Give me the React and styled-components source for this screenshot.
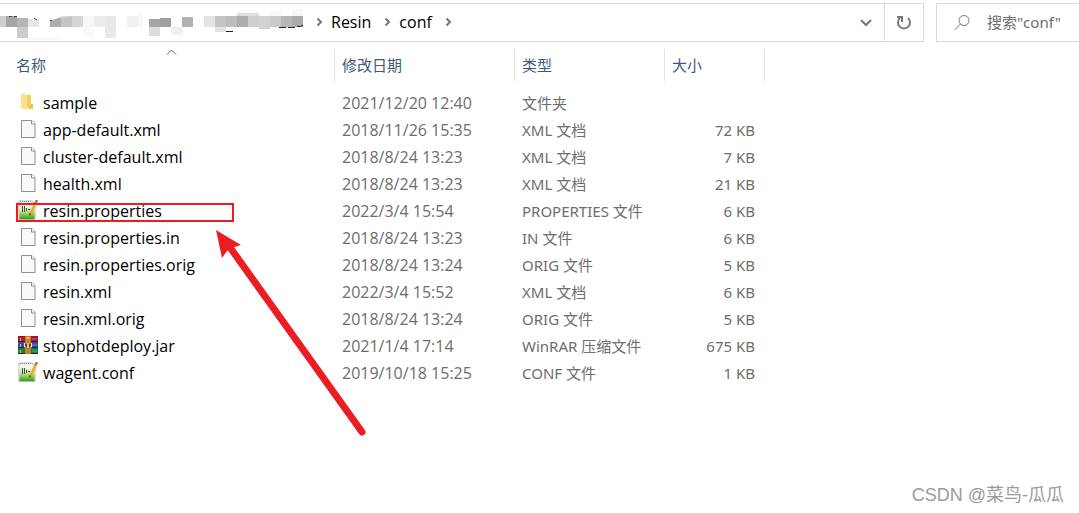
import React from 'react'
import styled, { createGlobalStyle } from 'styled-components'

const GlobalStyle = createGlobalStyle`
  * {
    box-sizing: border-box;
  }

  body {
    margin: 0;
    background: #ffffff;
    font-family: 'Noto Sans', 'Noto Sans CJK SC', sans-serif;
    font-size: 15px;
    line-height: 20px;
    color: #000000;
  }

  button,
  input {
    font: inherit;
  }
`

const Window = styled.div`
  position: relative;
  min-height: 100vh;
  padding-top: 3px;
  overflow: hidden;
`

const Toolbar = styled.div`
  display: flex;
  gap: 12px;
  height: 39px;
`

const AddressBar = styled.nav`
  display: flex;
  flex: 1;
  align-items: center;
  min-width: 0;
  border: 1px solid #d9d9d9;
  border-left: none;
`

const Crumbs = styled.div`
  display: flex;
  flex: 1;
  align-items: center;
  min-width: 0;
`

const Crumb = styled.button`
  padding: 0 0 2px;
  border: none;
  background: none;
  color: #000000;
  font-family: 'Open Sans', sans-serif;
  font-size: 16px;
`

const Separator = styled.svg`
  flex: none;
  width: 7px;
  height: 10px;
  margin: 0 8px 2px 13px;
`

const BarButton = styled.button`
  display: flex;
  align-items: center;
  justify-content: center;
  width: ${props => props.$width}px;
  height: 100%;
  padding: 0;
  border: none;
  border-left: ${props => (props.$divided ? '1px solid #d9d9d9' : 'none')};
  background: none;
`

const SearchBox = styled.label`
  display: flex;
  align-items: center;
  gap: 16px;
  width: 143px;
  padding: 0 0 2px 16px;
  border: 1px solid #d9d9d9;
  border-right: none;
`

const SearchInput = styled.input`
  flex: 1;
  min-width: 0;
  padding: 0;
  border: none;
  outline: none;

  &::placeholder {
    color: #6d6d6d;
    opacity: 1;
  }
`

const FileTable = styled.table`
  width: 765px;
  margin-top: 7px;
  border-collapse: separate;
  border-spacing: 0;
  table-layout: fixed;
`

const HeadCell = styled.th`
  position: relative;
  width: ${props => props.$width}px;
  height: 32px;
  padding: 0 0 0 ${props => (props.$first ? 16 : 7)}px;
  border-right: 1px solid #e2e2e2;
  color: #44597a;
  font-weight: 400;
  text-align: left;
`

const SortMark = styled.svg`
  position: absolute;
  top: 0;
  left: 50%;
  width: 11px;
  height: 7px;
  margin-left: -1px;
`

const Body = styled.tbody`
  &::before {
    content: '';
    display: block;
    height: 8px;
  }
`

const Cell = styled.td`
  height: 27px;
  padding: 0 10px 0 7px;
  color: #6d6d6d;
  text-align: ${props => (props.$right ? 'right' : 'left')};
  white-space: nowrap;
`

const DateCell = styled(Cell)`
  font-family: 'Open Sans', sans-serif;
  font-size: 16px;
`

const NameCell = styled(Cell)`
  position: relative;
  padding-left: 18px;
  color: #000000;
  font-family: 'Open Sans', sans-serif;
  font-size: 16px;
`

const FileName = styled.div`
  display: flex;
  align-items: center;
  gap: 5px;
`

const FileIcon = styled.svg`
  flex: none;
  width: 20px;
  height: 20px;
  margin-bottom: 2px;
`

const Highlight = styled.div`
  position: absolute;
  top: 6px;
  left: 16px;
  width: 218px;
  height: 19px;
  border: 2px solid #ed1c24;
`

const Arrow = styled.svg`
  position: absolute;
  top: 228px;
  left: 214px;
  width: 154px;
  height: 210px;
  pointer-events: none;
`

const Watermark = styled.div`
  position: absolute;
  right: 15px;
  bottom: 8px;
  color: #9b9b9b;
  font-family: 'Liberation Sans', 'Noto Sans CJK SC', sans-serif;
  font-size: 18px;
`

// x, y, width, height, fill
const BLOCKS = [
  [0, 16, 6, 11, '#cfcfcf'],
  [6, 16, 11, 11, '#a5a5a5'],
  [17, 18, 11, 9, '#b5b5b5'],
  [28, 19, 11, 8, '#e6e6e6'],
  [17, 27, 11, 11, '#cccccc'],
  [28, 38, 32, 2, '#f7f7f7'],
  [61, 16, 11, 11, '#c4c4c4'],
  [72, 16, 11, 11, '#d6d6d6'],
  [83, 16, 11, 11, '#f7f7f7'],
  [94, 16, 11, 11, '#ededed'],
  [105, 16, 11, 11, '#e9e9e9'],
  [83, 27, 11, 11, '#fafafa'],
  [105, 27, 11, 11, '#e8e8e8'],
  [127, 16, 11, 11, '#f1f1f1'],
  [138, 12, 5, 15, '#f8f8f8'],
  [149, 19, 11, 8, '#a6a6a6'],
  [160, 18, 11, 9, '#a0a0a0'],
  [149, 27, 11, 9, '#dddddd'],
  [171, 27, 11, 8, '#f0f0f0'],
  [182, 17, 11, 10, '#b2b2b2'],
  [204, 16, 11, 11, '#e4e4e4'],
  [215, 16, 11, 11, '#c5c5c5'],
  [226, 16, 11, 11, '#bdbdbd'],
  [237, 16, 11, 11, '#adadad'],
  [248, 16, 11, 11, '#cecece'],
  [259, 16, 11, 13, '#d2d2d2'],
  [270, 16, 11, 11, '#cbcbcb'],
  [281, 16, 11, 11, '#b7b7b7'],
  [292, 16, 11, 11, '#ababab'],
  [215, 27, 11, 5, '#e3e3e3'],
  [237, 13, 22, 3, '#dedede'],
  [270, 11, 11, 5, '#f8f8f8'],
  [292, 9, 11, 7, '#f8f8f8'],
]

const PathBlocks = styled.svg`
  flex: none;
  width: 303px;
  height: 37px;
`

const HiddenPath = () => (
  <PathBlocks viewBox="0 4 303 37" aria-hidden="true">
    {BLOCKS.map(([x, y, width, height, fill]) => (
      <rect key={`${x}-${y}`} x={x} y={y} width={width} height={height} fill={fill} />
    ))}
    <path d="M50 21l11-4v10H50z" fill="#adadad" />
    <path d="M61 16h11l-11 3z" fill="#d8d8d8" />
    <path d="M9 16.500h3M14 16.500h3M34 18l3 2M50 20.500h2" stroke="#444444" fill="none" />
    <path d="M226 31.500h7M279 27.500h7M288 27.500h7M297 26q3 2 6-1" stroke="#222222" fill="none" />
  </PathBlocks>
)

const Chevron = () => (
  <Separator viewBox="0 0 7 10" fill="none" stroke="#777777" strokeWidth="2">
    <path d="M1.500 1.500L5 5 1.500 8.500" />
  </Separator>
)

const FolderIcon = () => (
  <FileIcon viewBox="0 0 20 20">
    <path d="M3 2h8v12H3z" fill="#ffe9a6" />
    <path d="M9 3h4v13H9z" fill="#f3cf6b" />
    <path d="M13 12h2v5h-5z" fill="#eec259" />
    <path d="M3 2l6 2v14l-6-2z" fill="#ffe08a" />
  </FileIcon>
)

const PageIcon = () => (
  <FileIcon viewBox="0 0 20 20">
    <path d="M3.500 1.500h10.500l3 3v14H3.500z" fill="#f8faf9" stroke="#8f8f8f" />
    <path d="M13.500 1.500v3.500h3.500" fill="#ffffff" stroke="#8f8f8f" />
  </FileIcon>
)

const EditorIcon = () => (
  <FileIcon viewBox="0 0 20 20">
    <defs>
      <linearGradient id="editorGreen" x1="0" y1="0" x2="0" y2="1">
        <stop offset="0" stopColor="#f6f9f2" />
        <stop offset="0.400" stopColor="#d3ebb4" />
        <stop offset="0.750" stopColor="#79c63c" />
        <stop offset="1" stopColor="#2f9e20" />
      </linearGradient>
    </defs>
    <path d="M1 1h13l3 3v15.500H1z" fill="#f2f4f2" stroke="#b4bab4" />
    <path d="M1.500 4h15v15h-15z" fill="url(#editorGreen)" />
    <path d="M2 1.500h12" stroke="#8b8b8b" strokeDasharray="1 1" />
    <path d="M4.500 6v6M6.500 6v6M8.500 8v3" stroke="#3c5236" />
    <path d="M10 9.500h2" stroke="#3c5236" />
    <path d="M18 2l-5.500 12" stroke="#eea62c" strokeWidth="2.500" />
    <path d="M19 0l-1.500 3" stroke="#b9694f" strokeWidth="2.500" />
    <path d="M11.500 13l2 1-2.500 2z" fill="#594324" />
  </FileIcon>
)

const ArchiveIcon = () => (
  <FileIcon viewBox="0 0 20 20">
    <path d="M0 1h20v6H0z" fill="#b91532" />
    <path d="M0 7h20v6H0z" fill="#3e49a5" />
    <path d="M0 13h20v6H0z" fill="#16804a" />
    <path d="M0 1.500h20" stroke="#76202d" />
    <path d="M0 6.500h20M0 12.500h20M0 18.500h20" stroke="#202231" />
    <path d="M2.500 3v3M2.500 9v3M2.500 15v3" stroke="#f0b642" />
    <path d="M14 10h5M14 4h5M14 16h5" stroke="#ffffff" strokeOpacity="0.300" />
    <path d="M7 1h6v18H7z" fill="#c8711e" />
    <path d="M8 2h4v2H8z" fill="#f0b84a" />
    <path d="M8.500 5v3M11.500 5v3M8.500 14v4M11.500 14v4" stroke="#dc9638" />
    <path d="M6 9h8v4H6z" fill="#493629" />
    <path d="M6.500 8v4h2M13.500 8v4h-2" stroke="#eeeeee" fill="none" />
    <path d="M9 8h2v5H9z" fill="#f3c263" />
  </FileIcon>
)

const ICONS = {
  folder: FolderIcon,
  page: PageIcon,
  editor: EditorIcon,
  archive: ArchiveIcon,
}

const FILES = [
  { name: 'sample', date: '2021/12/20 12:40', type: '文件夹', size: '', icon: 'folder' },
  { name: 'app-default.xml', date: '2018/11/26 15:35', type: 'XML 文档', size: '72 KB', icon: 'page' },
  { name: 'cluster-default.xml', date: '2018/8/24 13:23', type: 'XML 文档', size: '7 KB', icon: 'page' },
  { name: 'health.xml', date: '2018/8/24 13:23', type: 'XML 文档', size: '21 KB', icon: 'page' },
  { name: 'resin.properties', date: '2022/3/4 15:54', type: 'PROPERTIES 文件', size: '6 KB', icon: 'editor', marked: true },
  { name: 'resin.properties.in', date: '2018/8/24 13:23', type: 'IN 文件', size: '6 KB', icon: 'page' },
  { name: 'resin.properties.orig', date: '2018/8/24 13:24', type: 'ORIG 文件', size: '5 KB', icon: 'page' },
  { name: 'resin.xml', date: '2022/3/4 15:52', type: 'XML 文档', size: '6 KB', icon: 'page' },
  { name: 'resin.xml.orig', date: '2018/8/24 13:24', type: 'ORIG 文件', size: '5 KB', icon: 'page' },
  { name: 'stophotdeploy.jar', date: '2021/1/4 17:14', type: 'WinRAR 压缩文件', size: '675 KB', icon: 'archive' },
  { name: 'wagent.conf', date: '2019/10/18 15:25', type: 'CONF 文件', size: '1 KB', icon: 'editor' },
]

const FileRow = ({ file }) => {
  const Icon = ICONS[file.icon]

  return (
    <tr>
      <NameCell>
        <FileName>
          <Icon />
          {file.name}
        </FileName>
        {file.marked && <Highlight />}
      </NameCell>
      <DateCell>{file.date}</DateCell>
      <Cell>{file.type}</Cell>
      <Cell $right>{file.size}</Cell>
    </tr>
  )
}

export default function App() {
  return (
    <Window>
      <GlobalStyle />
      <Toolbar>
        <AddressBar>
          <Crumbs>
            <HiddenPath />
            <Chevron />
            <Crumb>Resin</Crumb>
            <Chevron />
            <Crumb>conf</Crumb>
            <Chevron />
          </Crumbs>
          <BarButton $width={36} aria-label="History">
            <svg width="12" height="8" viewBox="0 0 12 8" fill="none" stroke="#777777" strokeWidth="2">
              <path d="M1 1l5 5 5-5" />
            </svg>
          </BarButton>
          <BarButton $width={39} $divided aria-label="Refresh">
            <svg width="16" height="16" viewBox="0 0 16 16" fill="none" stroke="#777777" strokeWidth="2">
              <path d="M12 3a6 6 0 1 1-8 0" />
              <path d="M1 2h5v5" />
            </svg>
          </BarButton>
        </AddressBar>
        <SearchBox>
          <svg width="18" height="18" viewBox="0 0 18 18" fill="none" stroke="#777777">
            <circle cx="11" cy="7.500" r="5" />
            <path d="M7.500 11L1.500 17" />
          </svg>
          <SearchInput type="text" aria-label="Search" placeholder={'搜索"conf"'} />
        </SearchBox>
      </Toolbar>

      <FileTable>
        <thead>
          <tr>
            <HeadCell $width={335} $first>
              名称
              <SortMark viewBox="0 0 11 7" fill="none" stroke="#666666">
                <path d="M1 5.500l4.500-4.500L10 5.500" />
              </SortMark>
            </HeadCell>
            <HeadCell $width={180}>修改日期</HeadCell>
            <HeadCell $width={150}>类型</HeadCell>
            <HeadCell $width={100}>大小</HeadCell>
          </tr>
        </thead>
        <Body>
          {FILES.map(file => (
            <FileRow key={file.name} file={file} />
          ))}
        </Body>
      </FileTable>

      <Arrow viewBox="214 228 154 210" aria-hidden="true">
        <path d="M229 246L362 432" stroke="#ed1c24" strokeWidth="7" strokeLinecap="round" />
        <path d="M216 230l25 15-10 3-4 3-5 7z" fill="#ed1c24" />
      </Arrow>
      <Watermark>CSDN @菜鸟-瓜瓜</Watermark>
    </Window>
  )
}
